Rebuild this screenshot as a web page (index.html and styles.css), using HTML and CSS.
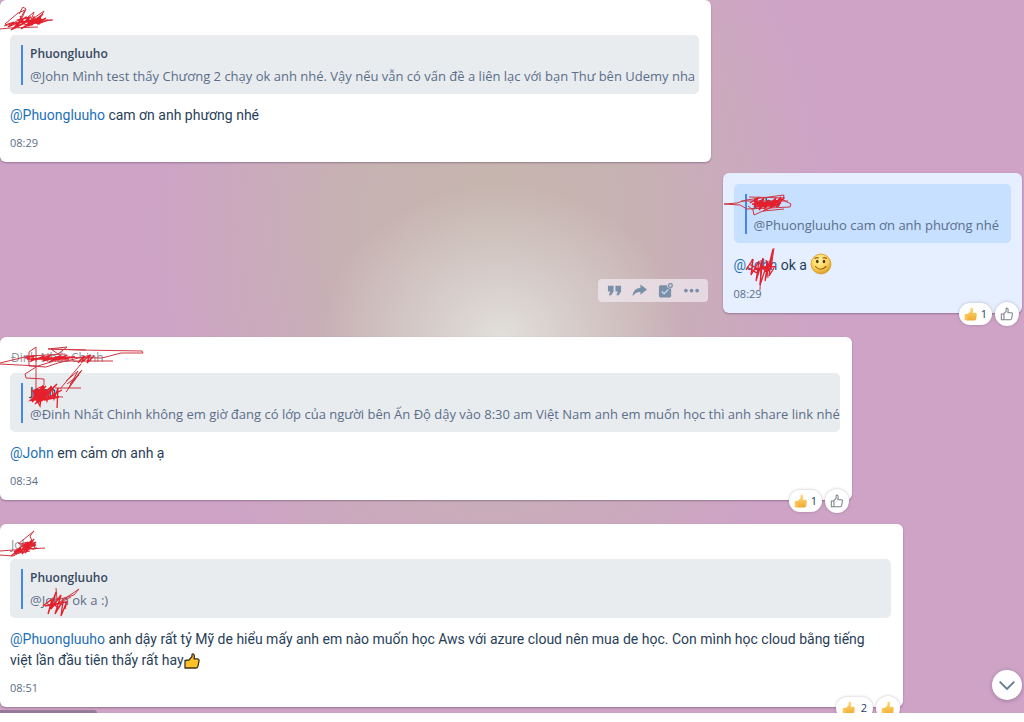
FILE: index.html
```html
<!DOCTYPE html>
<html lang="vi">
<head>
<meta charset="utf-8">
<meta name="viewport" content="width=device-width, initial-scale=1">
<title>Chat</title>
<link rel="stylesheet" href="styles.css">
</head>
<body>
<svg class="defs" aria-hidden="true">
  <defs>
    <linearGradient id="gold" x1="0" y1="0" x2="0" y2="1"><stop offset="0" stop-color="#ffd978"/><stop offset="1" stop-color="#f0ab35"/></linearGradient>
    <radialGradient id="face" cx=".42" cy=".32" r=".68"><stop offset="0" stop-color="#fff1a0"/><stop offset=".6" stop-color="#fbd358"/><stop offset="1" stop-color="#dc9c28"/></radialGradient>
    <symbol id="thumb" viewBox="0 0 16 16"><path d="M1 8.500 5 7.500 7.500 4.500V1.500Q8.200.2 9.500.8q1.300.9 1 3L10 6.500h3q1.800.3 1.600 1.800l-.6 5.200Q13.600 15.500 12 15.500H4L1 14.800Z" fill="url(#gold)"/><path d="M1 8.500h3.200v6.500H1Z" fill="#ffc34e"/></symbol>
    <symbol id="thumb-line" viewBox="0 0 16 16"><path d="M4.500 7.500 7 5V2.300q.2-1.300 1.300-.9 1.300.6 1 2.600L9 6.500h4q1.400.2 1.200 1.500l-.8 5q-.3 1.500-1.700 1.500H4.500ZM1.500 8h3v6.500h-3Z" fill="none" stroke="#7c8087" stroke-width="1.200" stroke-linejoin="round"/></symbol>
  </defs>
</svg>
<main class="chat">
  <article class="bubble bubble-first">
    <div class="sender">John</div>
    <blockquote class="quote"><div class="quote-body"><strong>Phuongluuho</strong><span>@John Mình test thấy Chương 2 chạy ok anh nhé. Vậy nếu vẫn có vấn đề a liên lạc với bạn Thư bên Udemy nha</span></div></blockquote>
    <p class="message"><a href="#">@Phuongluuho</a> cam ơn anh phương nhé</p>
    <time>08:29</time>
    <svg class="scribble" width="160" height="90" aria-hidden="true"><path class="thin" d="M0 29 10 28 38 27M5 24 18 13 25 10 20 19 12 24 33 20 53 20M19 14 23 7 26 9 22 18M28 17 34 12 31 20 44 11 38 22 52 20M4 26 22 21 40 24"/><path d="M5 25 14 22 8 27 22 21 11 30 25 23 15 28 30 20 17 26 34 19 21 29 36 20 25 27 43 14 32 24 41 18 37 24 46 18 28 26 18 20 31 17 22 24 13 29 17 24 26 17 30 25 34 17 38 24 48 20M20 16 24 23 28 18 32 25 40 17 42 23"/></svg>
  </article>

  <div class="own-row">
    <div class="tools" role="toolbar" aria-label="Message actions">
      <button aria-label="Quote"><svg viewBox="0 0 16 16"><path d="M1 3h6v6L4.500 13H2L3.500 9H1ZM9 3h6v6L12.500 13H10l1.500-4H9Z" fill="currentColor"/></svg></button>
      <button aria-label="Forward"><svg viewBox="0 0 16 16"><path d="M9 1.500 16 7 9 12.500V9.500Q4 9.200.5 14 1.500 5.500 9 5Z" fill="currentColor"/></svg></button>
      <button aria-label="Create task"><svg viewBox="0 0 16 16"><path d="M3 2.500h6.500a3.200 3.200 0 0 0 4.500 3V13.500q0 2-2 2H3q-2 0-2-2v-9q0-2 2-2Z" fill="currentColor"/><path d="m4 9 2.500 2.500L11 7" fill="none" stroke="#bcd6ef" stroke-width="1.500"/><circle cx="13.200" cy="2.600" r="2" fill="none" stroke="currentColor" stroke-width="1.400"/></svg></button>
      <button aria-label="More"><svg viewBox="0 0 16 16"><g fill="currentColor"><circle cx="2" cy="8" r="2"/><circle cx="8" cy="8" r="2"/><circle cx="14" cy="8" r="2"/></g></svg></button>
    </div>
    <article class="bubble bubble-own">
      <blockquote class="quote"><div class="quote-body"><strong>John</strong><span>@Phuongluuho cam ơn anh phương nhé</span></div></blockquote>
      <p class="message"><a href="#">@John</a> ok a <svg class="smile" viewBox="0 0 22 22" role="img" aria-label="smile"><circle cx="11" cy="11" r="10" fill="url(#face)" stroke="#d99b2c" stroke-width=".8"/><ellipse cx="7.300" cy="8.500" rx="1.300" ry="1.700" fill="#4b3515"/><ellipse cx="14" cy="8.500" rx="1.300" ry="1.700" fill="#4b3515"/><path d="M5 5.500Q6.500 4 8.500 5M13 5q2-1 3.500.5M5.500 13.500q5 5.500 10.500 0" fill="none" stroke="#98601b" stroke-width="1.100" stroke-linecap="round"/></svg></p>
      <time>08:29</time>
      <svg class="scribble" width="160" height="130" aria-hidden="true"><path class="thin" d="M1 31 14 30 23 27 61 22 60 27 68 31 67 34 24 36 17 32 1 31M18 28 65 28M26 24 62 25M25 33 30 37 31 42 40 38 61 36M37 117 38 87M45 105 43 87 48 96 51 75"/><path d="M27 30 35 25 31 34 41 25 36 37 46 27 41 36 53 25 48 35 58 24 53 34 60 26 38 32 29 31 55 29 33 34 57 32 31 29 58 30 40 38M23 97 30 86 28 102 36 88 33 108 40 85 37 112 45 88 42 108 50 76 46 103 51 95M24 94 34 100 39 92 44 100 49 91M28 98 45 93 53 94M26 91 37 97 50 90"/></svg>
      <div class="reactions"><button class="pill"><svg><use href="#thumb"/></svg>1</button><button class="round" aria-label="Like"><svg><use href="#thumb-line"/></svg></button></div>
    </article>
  </div>

  <article class="bubble bubble-third">
    <div class="sender">Đinh Nhất Chinh</div>
    <blockquote class="quote"><div class="quote-body"><strong>John</strong><span>@Đinh Nhất Chinh không em giờ đang có lớp của người bên Ấn Độ dậy vào 8:30 am Việt Nam anh em muốn học thì anh share link nhé</span></div></blockquote>
    <p class="message"><a href="#">@John</a> em cảm ơn anh ạ</p>
    <time>08:34</time>
    <svg class="scribble" width="160" height="90" aria-hidden="true"><path class="thin" d="M0 26 29 19 65 17M48 12 80 13 142 14 143 16 121 16 102 21 55 20M0 27 38 29 54 24 113 24M29 29 29 15 36 10 36 64M29 29 46 30 58 26 91 18M36 30 25 37 26 41 44 42V48M48 12 67 10 58 17 51 12 86 13M60 52 81 27M66 55 82 33M55 51 81 51M32 59 63 60"/><path d="M25 21 34 19 31 24 44 19 36 23 51 18 43 24 61 19 49 25 67 18 54 23 75 20 27 22 69 22M78 26 84 19 82 25 90 18 87 26 94 19M32 54 43 49 33 61 46 49 32 65 51 50 35 67 57 47 41 64 62 53 44 63 59 60 31 63 46 55 34 58 40 69 43 48 47 64 51 49 54 62 58 51 57 71"/><path class="thin" d="M66 44 78 34 68 52 81 34 70 47 79 38 67 47"/><path class="mass" d="M33 56 44 53 35 61 45 59 37 65"/></svg>
    <div class="reactions"><button class="pill"><svg><use href="#thumb"/></svg>1</button><button class="round" aria-label="Like"><svg><use href="#thumb-line"/></svg></button></div>
  </article>

  <article class="bubble bubble-last">
    <div class="sender">John</div>
    <blockquote class="quote"><div class="quote-body"><strong>Phuongluuho</strong><span>@John ok a :)</span></div></blockquote>
    <p class="message"><a href="#">@Phuongluuho</a> anh dậy rất tỷ Mỹ de hiểu mấy anh em nào muốn học Aws với azure cloud nên mua de học. Con mình học cloud bằng tiếng việt lần đầu tiên thấy rất hay<svg class="inline-thumb" viewBox="0 0 16 16" role="img" aria-label="thumbs up"><path d="M1 7.500 5 7 8 3.500V1.500q1-1.200 2 .3.800 1.500 0 4h3.500q1.800.4 1.500 2L14 13q-.4 2-2 2H1Z" fill="#ffc329" stroke="#3c3420" stroke-width="1.300" stroke-linejoin="round"/></svg></p>
    <time>08:51</time>
    <svg class="scribble" width="160" height="100" aria-hidden="true"><path class="thin" d="M0 27 13 26 45 24M0 31 13 32 23 27 14 30 30 27M18 20 34 7 30 12 35 24M19 20 31 18M56 64 57 75 51 84 79 65 74 71 57 76M61 78 71 73"/><path d="M11 32 21 24 14 28 28 18 20 28 32 16 22 30 34 15 25 29 36 18 15 29 36 21 21 21 33 25 37 24M43 82 52 75 48 90 56 68 51 85 61 71 55 90 63 77 61 92 67 77 65 85M45 82 66 78M49 86 53 79 58 84 63 78"/></svg>
    <div class="reactions"><button class="pill"><svg><use href="#thumb"/></svg>2</button><button class="round" aria-label="Like"><svg><use href="#thumb"/></svg></button></div>
  </article>
  <div class="scrollbar"></div>
  <button class="scroll-down" aria-label="Scroll to latest"><svg viewBox="0 0 16 16"><path d="m1.500 5 6.500 6.500L14.500 5" fill="none" stroke="#627b91" stroke-width="1.600"/></svg></button>
</main>
<footer class="composer"></footer>
</body>
</html>
```

FILE: styles.css
```css
* { box-sizing: border-box; }
body {
  margin: 0;
  min-height: 100vh;
  display: flex;
  flex-direction: column;
  font-family: "Open Sans", "Noto Sans", sans-serif;
  font-size: 14px;
  color: #283e58;
  background: #fff;
}
button { border: 0; padding: 0; font: inherit; color: inherit; cursor: pointer; }
svg { display: block; }
.defs { position: absolute; width: 0; height: 0; }
.chat {
  position: relative;
  flex: 1;
  overflow: hidden;
  padding-bottom: 5px;
  background:
    radial-gradient(ellipse 180px 150px at 49% 47%, #e1dfdb 0%, rgba(221, 215, 212, .7) 40%, rgba(210, 200, 200, 0) 100%),
    radial-gradient(ellipse 340px 440px at 48% 32%, #c6b5ae 0%, rgba(198, 180, 176, .9) 40%, rgba(207, 163, 197, 0) 100%),
    #cea3c6;
}
.bubble {
  position: relative;
  padding: 12px 12px 11px 10px;
  border-radius: 6px;
  background: #fff;
  box-shadow: 0 1px 2px rgba(70, 50, 80, .4);
}
.bubble-first { width: 69.4%; }
.bubble-own { width: 29.3%; padding: 11px; background: #e5efff; }
.bubble-third { width: 83.2%; margin-top: 24px; }
.bubble-last { width: 88.2%; margin-top: 24px; }
.own-row {
  display: flex;
  justify-content: flex-end;
  align-items: flex-end;
  gap: 15px;
  margin-top: 11px;
  padding-right: 2px;
}
.sender { margin-bottom: 5px; padding-left: 1px; font-size: 12px; line-height: 18px; color: #8b939e; }
.bubble-first .sender { color: transparent; }
.bubble-third .sender { margin-bottom: 6px; }
.quote { margin: 0; padding: 10px 11px 9px; border-radius: 5px; background: #e9ecef; }
.quote-body {
  display: flex;
  flex-direction: column;
  gap: 4px;
  padding-left: 7px;
  border-left: 2px solid #4388e8;
  font-size: 13px;
  line-height: 18px;
  color: #5a6e8a;
  white-space: nowrap;
}
.quote-body strong { font-size: 12px; font-weight: 600; color: #36485e; }
.bubble-own .quote { background: #c7e0ff; }
.message { margin: 11px 0 9px; padding-right: 8px; font-family: Roboto, "Noto Sans", sans-serif; line-height: 21px; }
.bubble-own .message { margin: 12px 0 10px; }
.message a { color: #1d70b8; text-decoration: none; }
time { display: block; font-size: 11px; line-height: 16px; color: #5a6e88; }
.smile { display: inline-block; width: 22px; height: 22px; margin: -4px 0 -2px; vertical-align: -3px; }
.inline-thumb { display: inline-block; width: 16px; height: 16px; vertical-align: -4px; }
.scribble { position: absolute; left: 0; top: 0; overflow: visible; pointer-events: none; }
.scribble path { fill: none; stroke: #e51f2b; stroke-width: 1.3; }
.scribble .thin { stroke: #cf3541; stroke-width: 1; }
.scribble .mass { stroke-width: 4; }
.reactions { position: absolute; right: 3px; bottom: -13px; display: flex; align-items: center; gap: 3px; }
.pill, .round {
  display: flex;
  align-items: center;
  justify-content: center;
  background: #fff;
  box-shadow: 0 0 3px rgba(80, 60, 90, .35);
}
.pill { gap: 3px; height: 22px; padding: 0 5px; border-radius: 11px; font-size: 11px; line-height: 14px; }
.bubble-last .pill { gap: 5px; padding: 0 6px; }
.round { width: 24px; height: 24px; border-radius: 50%; }
.reactions svg { width: 14px; height: 14px; }
.tools {
  display: flex;
  align-items: center;
  justify-content: space-between;
  width: 110px;
  height: 23px;
  margin-bottom: 11px;
  padding: 0 9px;
  border-radius: 4px;
  background: rgba(239, 231, 238, .75);
  color: #7a8fa8;
}
.tools button { background: none; }
.tools svg { width: 15px; height: 15px; }
.scrollbar { position: absolute; left: 0; bottom: 0; width: 97px; height: 3px; border-radius: 0 3px 0 0; background: #987a98; }
.scroll-down {
  position: absolute;
  right: 2px;
  bottom: 13px;
  display: flex;
  align-items: center;
  justify-content: center;
  width: 30px;
  height: 30px;
  border-radius: 50%;
  background: #fff;
  box-shadow: 0 1px 4px rgba(80, 60, 90, .4);
}
.scroll-down svg { width: 18px; height: 18px; }
.composer { height: 9px; background: #fff; }
```
